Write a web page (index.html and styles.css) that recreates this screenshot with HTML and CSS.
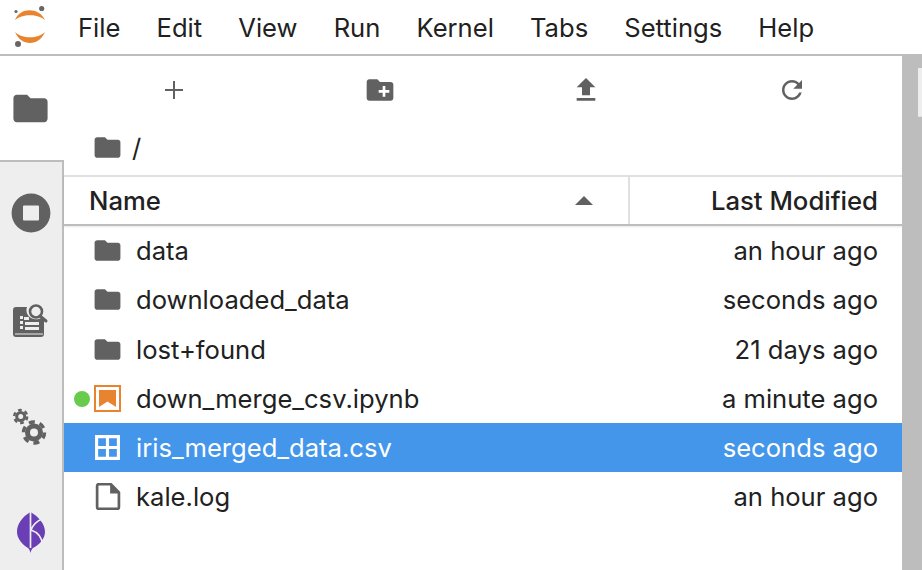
FILE: index.html
```html
<!DOCTYPE html>
<html lang="en">

<head>
    <meta charset="UTF-8">
    <title>JupyterLab</title>
    <link rel="stylesheet" href="styles.css">
</head>

<body>

    <div id="menu-bar">
        <svg class="logo" viewBox="0 0 46 46" width="46" height="46">
            <path d="M7 16 C12 3 31 3 37 16 C30 9.500 14 9.500 7 16 Z" fill="#e8842f" />
            <path d="M7 28 C13 42.700 31 42.700 37 28 C30 35 14 35 7 28 Z" fill="#e8842f" />
            <circle cx="33.700" cy="4.500" r="2.600" fill="#666" />
            <circle cx="8" cy="7.500" r="1.600" fill="#666" />
            <circle cx="10" cy="40" r="3" fill="#666" />
        </svg>
        <div class="menu-item">File</div>
        <div class="menu-item">Edit</div>
        <div class="menu-item">View</div>
        <div class="menu-item">Run</div>
        <div class="menu-item">Kernel</div>
        <div class="menu-item">Tabs</div>
        <div class="menu-item">Settings</div>
        <div class="menu-item">Help</div>
    </div>

    <div id="main">
        <div id="side-bar">
            <div class="side-tab active">
                <svg viewBox="0 0 24 24" width="41" height="41"><path d="M10 4H4c-1.1 0-1.99.9-1.99 2L2 18c0 1.1.9 2 2 2h16c1.1 0 2-.9 2-2V8c0-1.1-.9-2-2-2h-8l-2-2z" /></svg>
            </div>
            <div class="side-rest">
                <div class="side-tab">
                    <svg viewBox="0 0 40 40" width="40" height="40"><path fill-rule="evenodd" d="M20 .6a19.4 19.4 0 1 0 0 38.8a19.4 19.4 0 1 0 0-38.8zM13 12.5h14a1 1 0 0 1 1 1v13a1 1 0 0 1-1 1H13a1 1 0 0 1-1-1v-13a1 1 0 0 1 1-1z" /></svg>
                </div>
                <div class="side-tab">
                    <svg viewBox="0 0 36 36" width="36" height="36">
                        <path d="M3 5h11c-.8 2-.8 5 .4 7.300 1.800 3.200 5 5 8.600 5 2 0 4-.5 5.500-1.500l2.500 2.500V32a3 3 0 0 1-3 3H3a3 3 0 0 1-3-3V8a3 3 0 0 1 3-3z" />
                        <path d="M7 14h3v3H7zM7 19h3v3H7zM7 24h3v3H7zM12 20h14v3H12zM12 25h14v3H12zM11 15h5v3h-5zM2 31.500h28v1H2z" fill="#eee" />
                        <circle cx="23" cy="9.500" r="6" fill="none" stroke="#616161" stroke-width="2.600" />
                        <path d="M27 14l6 5" stroke="#616161" stroke-width="3" stroke-linecap="round" />
                    </svg>
                </div>
                <div class="side-tab">
                    <svg viewBox="0 0 36 40" width="36" height="40">
                        <circle cx="7.700" cy="10.500" r="4" fill="none" stroke="#616161" stroke-width="3" />
                        <circle cx="7.700" cy="10.500" r="6.500" fill="none" stroke="#616161" stroke-width="2.400" stroke-dasharray="3.700 3.100" />
                        <circle cx="21" cy="26.500" r="6.500" fill="none" stroke="#616161" stroke-width="5" />
                        <circle cx="21" cy="26.500" r="10.500" fill="none" stroke="#616161" stroke-width="3.500" stroke-dasharray="6 5" />
                    </svg>
                </div>
                <div class="side-tab">
                    <svg viewBox="0 0 28 41" width="28" height="41">
                        <path d="M13.500 0 C5 5 0 12 0 20 C0 27 6 33 11 36 C12.500 37 13 39 13.500 41 C14 39 14.500 37 16 36 C22 33 28 27 28 20 C28 12 22 5 13.500 0 Z" fill="#6a3fb5" />
                        <path d="M13.500 0 V36 M14 18 C16 13 20 9 25 7 M14 18 C20 20 25 25 25.500 33" fill="none" stroke="#eeeeee" stroke-width="1.700" />
                    </svg>
                </div>
            </div>
        </div>

        <div id="file-browser">
            <div id="toolbar">
                <div class="tool"><svg viewBox="0 0 24 24" width="24" height="24"><path d="M11 3h2v8h8v2h-8v8h-2v-8H3v-2h8z" /></svg></div>
                <div class="tool"><svg viewBox="0 0 24 24" width="32" height="32"><path d="M20 6h-8l-2-2H4c-1.110 0-1.990.89-1.990 2L2 18c0 1.110.89 2 2 2h16c1.110 0 2-.89 2-2V8c0-1.110-.89-2-2-2zm-1 8h-3v3h-2v-3h-3v-2h3V9h2v3h3v2z" /></svg></div>
                <div class="tool"><svg viewBox="0 0 24 24" width="32" height="32"><path d="M9 16h6v-6h4l-7-7-7 7h4zm-4 2h14v2H5z" /></svg></div>
                <div class="tool"><svg viewBox="0 0 24 24" width="30" height="30"><path d="M17.650 6.350C16.200 4.900 14.210 4 12 4c-4.420 0-7.990 3.580-7.990 8s3.570 8 7.990 8c3.730 0 6.840-2.550 7.730-6h-2.080c-.82 2.330-3.040 4-5.650 4-3.310 0-6-2.690-6-6s2.690-6 6-6c1.660 0 3.140.69 4.220 1.780L13 11h7V4l-2.350 2.350z" /></svg></div>
            </div>

            <div id="crumbs">
                <svg viewBox="0 0 24 24" width="31" height="31"><path d="M10 4H4c-1.100 0-1.990.9-1.990 2L2 18c0 1.100.9 2 2 2h16c1.100 0 2-.9 2-2V8c0-1.100-.9-2-2-2h-8l-2-2z" /></svg>
                <span>/</span>
            </div>

            <div id="list-header">
                <div class="col-name">
                    <span>Name</span>
                    <svg viewBox="0 0 18 9" width="18" height="9"><path d="M9 0l9 9H0z" /></svg>
                </div>
                <div class="col-modified">Last Modified</div>
            </div>

            <div id="list">
                <div class="file-row">
                    <svg class="file-icon" viewBox="0 0 24 24"><path d="M10 4H4c-1.100 0-1.990.9-1.990 2L2 18c0 1.100.9 2 2 2h16c1.100 0 2-.9 2-2V8c0-1.100-.9-2-2-2h-8l-2-2z" /></svg>
                    <span class="file-name">data</span>
                    <span class="file-time">an hour ago</span>
                </div>
                <div class="file-row">
                    <svg class="file-icon" viewBox="0 0 24 24"><path d="M10 4H4c-1.100 0-1.990.9-1.990 2L2 18c0 1.100.9 2 2 2h16c1.100 0 2-.9 2-2V8c0-1.100-.9-2-2-2h-8l-2-2z" /></svg>
                    <span class="file-name">downloaded_data</span>
                    <span class="file-time">seconds ago</span>
                </div>
                <div class="file-row">
                    <svg class="file-icon" viewBox="0 0 24 24"><path d="M10 4H4c-1.100 0-1.990.9-1.990 2L2 18c0 1.100.9 2 2 2h16c1.100 0 2-.9 2-2V8c0-1.100-.9-2-2-2h-8l-2-2z" /></svg>
                    <span class="file-name">lost+found</span>
                    <span class="file-time">21 days ago</span>
                </div>
                <div class="file-row">
                    <div class="running-dot"></div>
                    <svg class="file-icon" viewBox="0 0 27 27"><rect x="1" y="1" width="25" height="25" fill="none" stroke="#e8842f" stroke-width="2" /><path d="M5 5h17v17l-8.500-5.500L5 22z" fill="#e8842f" /></svg>
                    <span class="file-name">down_merge_csv.ipynb</span>
                    <span class="file-time">a minute ago</span>
                </div>
                <div class="file-row selected">
                    <svg class="file-icon" viewBox="0 0 26 26"><path fill-rule="evenodd" fill="#fff" d="M1 1h24v24H1zM4 4v7.500h7.500V4zM14.500 4v7.500H22V4zM4 14.500V22h7.500v-7.500zM14.500 14.500V22H22v-7.500z" /></svg>
                    <span class="file-name">iris_merged_data.csv</span>
                    <span class="file-time">seconds ago</span>
                </div>
                <div class="file-row">
                    <svg class="file-icon" viewBox="0 0 26 26"><path d="M3 3a2 2 0 0 1 2-2h11l8 8v14a2 2 0 0 1-2 2H5a2 2 0 0 1-2-2z" fill="none" stroke="#616161" stroke-width="2.600" stroke-linejoin="round" /><path d="M15.500 1v9h9z" fill="#616161" /></svg>
                    <span class="file-name">kale.log</span>
                    <span class="file-time">an hour ago</span>
                </div>
            </div>
        </div>

        <div id="gutter">
            <div class="gutter-tab"></div>
        </div>
    </div>

</body>

</html>
```

FILE: styles.css
```css
html,
body {
    margin: 0;
    height: 100%;
    overflow: hidden;
}

body {
    display: flex;
    flex-direction: column;
    font-family: Inter, "Liberation Sans", sans-serif;
    font-size: 25.6px;
    color: #212121;
    background-color: white;
}

svg {
    fill: #616161;
    flex: none;
    display: block;
}

/* top menu */
#menu-bar {
    display: flex;
    align-items: center;
    height: 54px;
    border-bottom: 2px solid #bdbdbd;
    flex: none;
}

.logo {
    margin: 0 0 0 8px;
}

.menu-item {
    margin-left: 24px;
    margin-right: 12.1px;
}

#main {
    flex: 1;
    display: flex;
    min-height: 0;
}

/* left icons */
#side-bar {
    width: 64px;
    flex: none;
    display: flex;
    flex-direction: column;
}

.side-tab {
    height: 106.5px;
    flex: none;
    display: flex;
    align-items: center;
    justify-content: center;
}

.side-tab.active {
    height: 104px;
    padding-right: 3px;
}

.side-rest {
    flex: 1;
    min-height: 0;
    overflow: hidden;
    background-color: #eeeeee;
    border-top: 2px solid #bdbdbd;
    border-right: 2px solid #bdbdbd;
}

.side-rest .side-tab:first-child {
    margin-top: -2px;
}

/* file browser */
#file-browser {
    flex: 1;
    min-width: 0;
}

#toolbar {
    display: grid;
    grid-template-columns: repeat(4, 206px);
    padding: 0 7px;
    height: 68px;
}

.tool {
    display: flex;
    align-items: center;
    justify-content: center;
}

#crumbs {
    display: flex;
    align-items: center;
    gap: 9px;
    height: 51px;
    padding: 0 0 4px 28px;
    box-sizing: border-box;
}

#list-header {
    display: flex;
    height: 51px;
    box-sizing: border-box;
    border-top: 2px solid #e0e0e0;
    border-bottom: 2px solid #bdbdbd;
    font-weight: 500;
    font-size: 25.7px;
    box-shadow: 0 1px 2px rgba(0, 0, 0, 0.1);
}

.col-name {
    width: 566px;
    flex: none;
    box-sizing: border-box;
    display: flex;
    align-items: center;
    justify-content: space-between;
    padding: 0 35px 0 25px;
    border-right: 2px solid #e0e0e0;
}

.col-modified {
    flex: 1;
    display: flex;
    align-items: center;
    justify-content: flex-end;
    padding-right: 24px;
}

.file-row {
    position: relative;
    display: flex;
    align-items: center;
    height: 49.25px;
    padding: 0 24px 0 28px;
}

.file-row.selected {
    background-color: #4496eb;
    color: white;
}

.file-icon {
    width: 31px;
    height: 31px;
    margin-right: 13px;
}

.file-row:nth-child(n+4) .file-icon {
    width: 27px;
    height: 27px;
    margin: 0 15px 0 2px;
}

.file-name {
    flex: 1;
}

/* over the row's left edge */
.running-dot {
    position: absolute;
    left: 10px;
    top: 17px;
    width: 16px;
    height: 16px;
    border-radius: 50%;
    background-color: #69cb4b;
}

#gutter {
    width: 20px;
    flex: none;
    background-color: #bdbdbd;
    padding-top: 12px;
    box-sizing: border-box;
}

.gutter-tab {
    height: 48px;
    margin-left: 16px;
    background-color: #eeeeee;
    border-bottom: 1px solid #e0e0e0;
}
```
